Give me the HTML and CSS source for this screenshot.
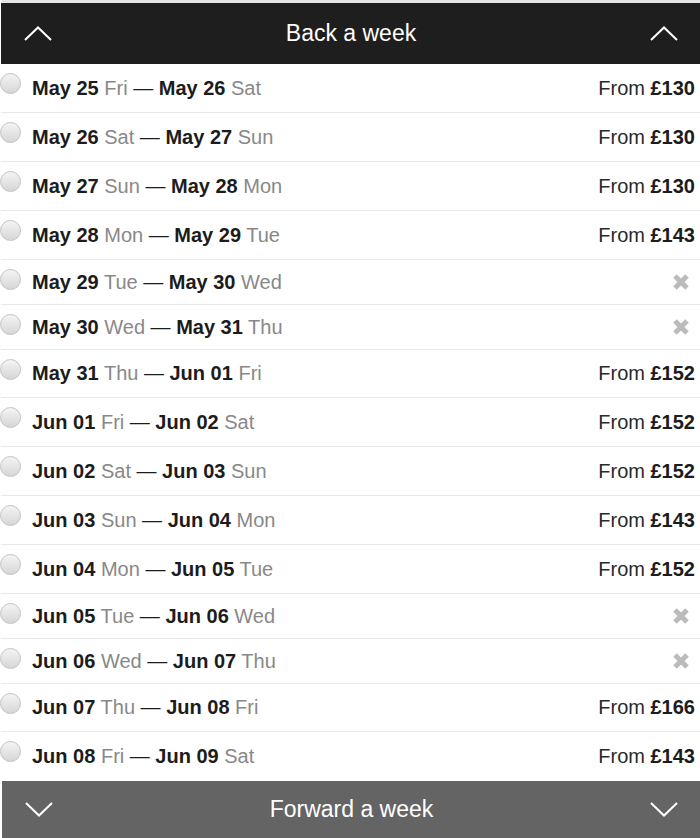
FILE: index.html
```html
<!DOCTYPE html>
<html lang="en"><head><meta charset="UTF-8">
  <meta name="viewport" content="width=device-width, initial-scale=1.0">
  <title>Choose dates</title>
  <link rel="stylesheet" href="styles.css">
</head>
<body>
  <div class="picker">
    <div class="nav nav-back">
      <svg class="chev" viewBox="0 0 28 15"><polyline points="1,14 14,1.5 27,14"/></svg>
      <span>Back a week</span>
      <svg class="chev" viewBox="0 0 28 15"><polyline points="1,14 14,1.5 27,14"/></svg>
    </div>

    <ul class="dates">
      <li class="row"><span class="radio"></span><span class="range"><b>May 25</b> Fri <i>—</i> <b>May 26</b> Sat</span><span class="price">From <b>£130</b></span></li>
      <li class="row"><span class="radio"></span><span class="range"><b>May 26</b> Sat <i>—</i> <b>May 27</b> Sun</span><span class="price">From <b>£130</b></span></li>
      <li class="row"><span class="radio"></span><span class="range"><b>May 27</b> Sun <i>—</i> <b>May 28</b> Mon</span><span class="price">From <b>£130</b></span></li>
      <li class="row"><span class="radio"></span><span class="range"><b>May 28</b> Mon <i>—</i> <b>May 29</b> Tue</span><span class="price">From <b>£143</b></span></li>
      <li class="row none"><span class="radio"></span><span class="range"><b>May 29</b> Tue <i>—</i> <b>May 30</b> Wed</span><svg class="cross" viewBox="0 0 20 20"><path d="M4 4 16 16M16 4 4 16"/></svg></li>
      <li class="row none"><span class="radio"></span><span class="range"><b>May 30</b> Wed <i>—</i> <b>May 31</b> Thu</span><svg class="cross" viewBox="0 0 20 20"><path d="M4 4 16 16M16 4 4 16"/></svg></li>
      <li class="row after"><span class="radio"></span><span class="range"><b>May 31</b> Thu <i>—</i> <b>Jun 01</b> Fri</span><span class="price">From <b>£152</b></span></li>
      <li class="row"><span class="radio"></span><span class="range"><b>Jun 01</b> Fri <i>—</i> <b>Jun 02</b> Sat</span><span class="price">From <b>£152</b></span></li>
      <li class="row"><span class="radio"></span><span class="range"><b>Jun 02</b> Sat <i>—</i> <b>Jun 03</b> Sun</span><span class="price">From <b>£152</b></span></li>
      <li class="row"><span class="radio"></span><span class="range"><b>Jun 03</b> Sun <i>—</i> <b>Jun 04</b> Mon</span><span class="price">From <b>£143</b></span></li>
      <li class="row"><span class="radio"></span><span class="range"><b>Jun 04</b> Mon <i>—</i> <b>Jun 05</b> Tue</span><span class="price">From <b>£152</b></span></li>
      <li class="row none"><span class="radio"></span><span class="range"><b>Jun 05</b> Tue <i>—</i> <b>Jun 06</b> Wed</span><svg class="cross" viewBox="0 0 20 20"><path d="M4 4 16 16M16 4 4 16"/></svg></li>
      <li class="row none"><span class="radio"></span><span class="range"><b>Jun 06</b> Wed <i>—</i> <b>Jun 07</b> Thu</span><svg class="cross" viewBox="0 0 20 20"><path d="M4 4 16 16M16 4 4 16"/></svg></li>
      <li class="row after"><span class="radio"></span><span class="range"><b>Jun 07</b> Thu <i>—</i> <b>Jun 08</b> Fri</span><span class="price">From <b>£166</b></span></li>
      <li class="row last"><span class="radio"></span><span class="range"><b>Jun 08</b> Fri <i>—</i> <b>Jun 09</b> Sat</span><span class="price">From <b>£143</b></span></li>
    </ul>

    <div class="nav nav-fwd">
      <svg class="chev" viewBox="0 0 28 15"><polyline points="1,1 14,13.5 27,1"/></svg>
      <span>Forward a week</span>
      <svg class="chev" viewBox="0 0 28 15"><polyline points="1,1 14,13.5 27,1"/></svg>
    </div>
  </div>
</body></html>
```

FILE: styles.css
```css
body { margin: 0; background: #fff; font-family: "Liberation Sans", Arial, sans-serif; }
.picker { border-top: 3px solid #e4e4e4; margin-left: 1px; }

.nav { display: flex; align-items: center; justify-content: space-between; padding: 0 22px 0 23px; color: #fff; font-size: 23px; }
.nav-back { background: #1e1e1e; height: 61px; }
.nav-fwd { background: #646464; height: 57px; margin-left: 1px; }
.chev { width: 28px; height: 15px; fill: none; stroke: #fff; stroke-width: 2; }

.dates { list-style: none; margin: 0; padding: 0; }
.row { display: flex; align-items: center; height: 48px; border-bottom: 1px solid #e8e8e8; font-size: 20px; color: #888; }
.row.none { height: 44px; }
.row.after { height: 47px; }
.row.last { border-bottom: none; height: 49px; }
.radio { align-self: flex-start; margin-top: 9px; width: 19px; height: 19px; border: 1px solid #c2c2c2; border-radius: 50%; background: linear-gradient(#f4f4f4, #d6d6d6); margin-right: 11px; flex: none; margin-left: -1px; }
.range b { color: #1c1c1c; }
.range i { font-style: normal; color: #1c1c1c; }
.price { margin-left: auto; margin-right: 5px; color: #2a2a2a; }
.price b { color: #1c1c1c; }
.cross { margin-left: auto; margin-right: 9px; width: 20px; height: 20px; fill: none; stroke: #bbb; stroke-width: 5; }
```
